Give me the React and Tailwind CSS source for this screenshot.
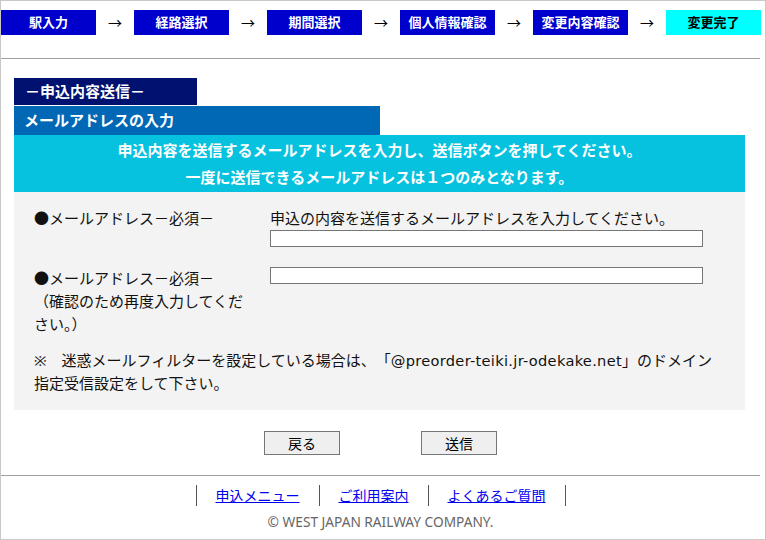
const steps = ["駅入力", "経路選択", "期間選択", "個人情報確認", "変更内容確認", "変更完了"];

function StepBar() {
  return (
    <div className="flex items-center pt-[9px] pb-[23px] border-b border-[#a0a0a0]">
      {steps.map((s, i) => (
        <div key={s} className="flex items-center">
          {i > 0 && (
            <div className="w-[38px] text-center text-[14px] leading-[25px] text-black">→</div>
          )}
          <div
            className={
              i === steps.length - 1
                ? "w-[95px] h-[25px] flex items-center justify-center bg-[#00ffff] text-black font-bold text-[13px]"
                : "w-[95px] h-[25px] flex items-center justify-center bg-[#0000cc] text-white font-bold text-[13px]"
            }
          >
            {s}
          </div>
        </div>
      ))}
    </div>
  );
}

export default function App() {
  return (
    <div className="w-[766px] h-[540px] overflow-hidden border border-[#c8c8c8] bg-white text-[#222] font-['Noto_Sans','Noto_Sans_CJK_JP',sans-serif]">
      <div className="w-[759px]">
        <StepBar />

        <div className="pl-[13px] pr-[15px] pt-[19px]">
          <div className="w-[183px] h-[27px] pl-[11px] flex items-center bg-[#00116f] text-white font-bold text-[15px]">
            －申込内容送信－
          </div>
          <div className="w-[366px] h-[29px] mt-[1px] pl-[10px] flex items-center bg-[#0068b5] text-white font-bold text-[15px]">
            メールアドレスの入力
          </div>
          <div className="h-[57px] flex flex-col justify-center bg-[#06c2de] text-white font-bold text-[15px] leading-[27px] text-center">
            <div>申込内容を送信するメールアドレスを入力し、送信ボタンを押してください。</div>
            <div>一度に送信できるメールアドレスは１つのみとなります。</div>
          </div>

          <div className="bg-[#f3f3f3] pl-[20px] pr-[20px] pt-[15px] pb-[15px] text-[15px] leading-[23px] text-[#111]">
            <div className="flex">
              <div className="w-[236px] pr-[18px] shrink-0">●メールアドレス－必須－</div>
              <div>
                <div>申込の内容を送信するメールアドレスを入力してください。</div>
                <input
                  type="text"
                  className="block w-[433px] h-[17px] bg-white border border-[#767676]"
                />
              </div>
            </div>

            <div className="flex mt-[20px]">
              <div className="w-[236px] pr-[18px] shrink-0">
                ●メールアドレス－必須－
                <br />
                （確認のため再度入力してください。）
              </div>
              <div>
                <input
                  type="text"
                  className="block w-[433px] h-[17px] bg-white border border-[#767676]"
                />
              </div>
            </div>

            <div className="mt-[13px]">
              ※　迷惑メールフィルターを設定している場合は、　「
              <span className="font-['DejaVu_Sans',sans-serif] text-[14.6px] tracking-[0.3px]">@preorder-teiki.jr-odekake.net</span>
              」のドメイン
              <br />
              指定受信設定をして下さい。
            </div>
          </div>
        </div>

        <div className="flex justify-center gap-[81px] pt-[21px] pb-[20px] border-b border-[#a0a0a0]">
          <button className="w-[76px] h-[24px] bg-[#efefef] border border-[#767676] text-[14px] text-black">
            戻る
          </button>
          <button className="w-[76px] h-[24px] bg-[#efefef] border border-[#767676] text-[14px] text-black">
            送信
          </button>
        </div>

        <div className="flex justify-center pt-[9px]">
          <div className="flex border-r border-[#555]">
            {["申込メニュー", "ご利用案内", "よくあるご質問"].map((l) => (
              <div key={l} className="border-l border-[#555] px-[19px] h-[21px] flex items-center">
                <a href="#" className="text-[14px] leading-[21px] text-[#0000ee] underline">
                  {l}
                </a>
              </div>
            ))}
          </div>
        </div>
        <div className="text-center text-[13.7px] leading-[20px] mt-[6px] text-[#666]">
          © WEST JAPAN RAILWAY COMPANY.
        </div>
      </div>
    </div>
  );
}
